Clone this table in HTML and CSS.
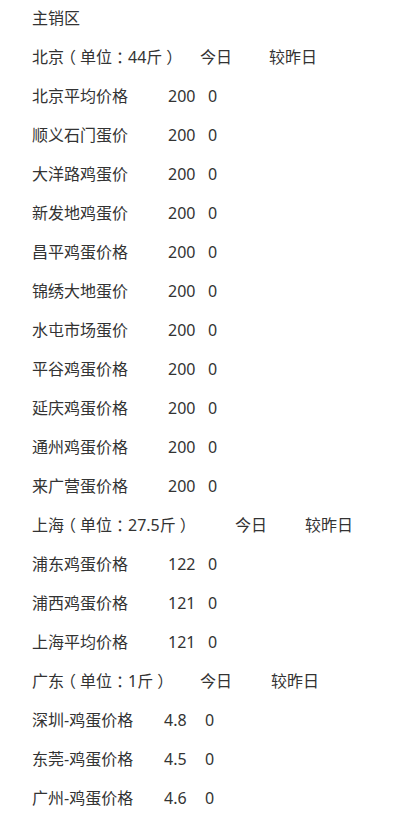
FILE: index.html
```html
<!DOCTYPE html>
<html lang="zh-CN">
<head>
<meta charset="utf-8">
<link rel="stylesheet" href="styles.css">
</head>
<body>
<div class="page">
  <div class="row"><span>主销区</span></div>

  <div class="row"><span class="c-hd">北京<span class="p">（</span>单位<span class="p">：</span>44斤<span class="p">）</span></span><span class="c-today">今日</span><span>较昨日</span></div>
  <div class="row"><span class="c-name">北京平均价格</span><span class="c-val">200</span><span>0</span></div>
  <div class="row"><span class="c-name">顺义石门蛋价</span><span class="c-val">200</span><span>0</span></div>
  <div class="row"><span class="c-name">大洋路鸡蛋价</span><span class="c-val">200</span><span>0</span></div>
  <div class="row"><span class="c-name">新发地鸡蛋价</span><span class="c-val">200</span><span>0</span></div>
  <div class="row"><span class="c-name">昌平鸡蛋价格</span><span class="c-val">200</span><span>0</span></div>
  <div class="row"><span class="c-name">锦绣大地蛋价</span><span class="c-val">200</span><span>0</span></div>
  <div class="row"><span class="c-name">水屯市场蛋价</span><span class="c-val">200</span><span>0</span></div>
  <div class="row"><span class="c-name">平谷鸡蛋价格</span><span class="c-val">200</span><span>0</span></div>
  <div class="row"><span class="c-name">延庆鸡蛋价格</span><span class="c-val">200</span><span>0</span></div>
  <div class="row"><span class="c-name">通州鸡蛋价格</span><span class="c-val">200</span><span>0</span></div>
  <div class="row"><span class="c-name">来广营蛋价格</span><span class="c-val">200</span><span>0</span></div>

  <div class="row"><span class="c-hd-sh">上海<span class="p">（</span>单位<span class="p">：</span>27.5斤<span class="p">）</span></span><span class="c-today-sh">今日</span><span>较昨日</span></div>
  <div class="row"><span class="c-name">浦东鸡蛋价格</span><span class="c-val">122</span><span>0</span></div>
  <div class="row"><span class="c-name">浦西鸡蛋价格</span><span class="c-val">121</span><span>0</span></div>
  <div class="row"><span class="c-name">上海平均价格</span><span class="c-val">121</span><span>0</span></div>

  <div class="row"><span class="c-hd">广东<span class="p">（</span>单位<span class="p">：</span>1斤<span class="p">）</span></span><span class="c-today-gd">今日</span><span>较昨日</span></div>
  <div class="row"><span class="c-name-gd">深圳-鸡蛋价格</span><span class="c-val-gd">4.8</span><span>0</span></div>
  <div class="row"><span class="c-name-gd">东莞-鸡蛋价格</span><span class="c-val-gd">4.5</span><span>0</span></div>
  <div class="row"><span class="c-name-gd">广州-鸡蛋价格</span><span class="c-val-gd">4.6</span><span>0</span></div>
</div>
</body>
</html>
```

FILE: styles.css
```css
html, body {
  margin: 0;
  padding: 0;
  background: #ffffff;
}
.page {
  padding: 0 0 0 32px;
  margin-top: -1px;
  font-family: "Noto Sans", "Noto Sans CJK SC", sans-serif;
  font-size: 16px;
  color: #333333;
}
.row {
  display: flex;
  height: 39px;
  line-height: 39px;
  white-space: nowrap;
}
.p {
  display: inline-block;
  width: 1em;
  text-align: center;
  font-feature-settings: "halt";
}
.c-hd { width: 168px; }
.c-today { width: 69px; }
.c-hd-sh { width: 203px; }
.c-today-sh { width: 70px; }
.c-today-gd { width: 71px; }
.c-name { width: 136px; }
.c-val { width: 40px; }
.c-name-gd { width: 132px; }
.c-val-gd { width: 41px; }
```
